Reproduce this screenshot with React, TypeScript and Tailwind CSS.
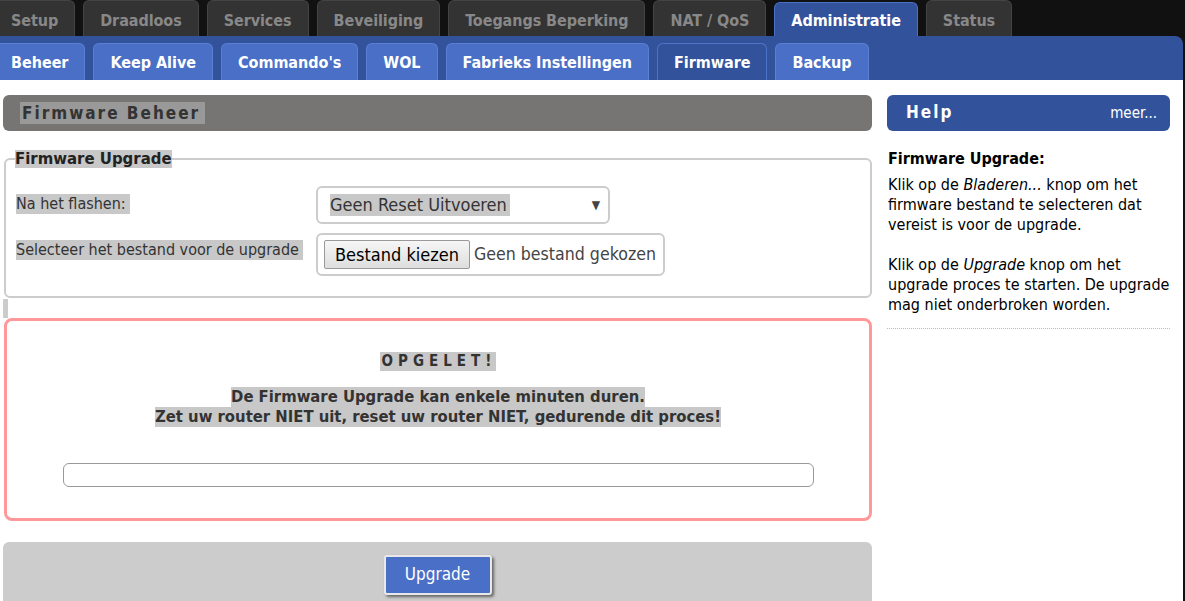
import React from "react";

const F = "font-['DejaVu_Sans_Condensed','DejaVu_Sans',sans-serif]";

const topTabs = ["Setup", "Draadloos", "Services", "Beveiliging", "Toegangs Beperking", "NAT / QoS", "Administratie", "Status"];
const subTabs = ["Beheer", "Keep Alive", "Commando's", "WOL", "Fabrieks Instellingen", "Firmware", "Backup"];

export default function App() {
  return (
    <div className={`w-[1185px] h-[601px] overflow-hidden bg-[#111] ${F}`}>
      {/* top tabs */}
      <div className="flex gap-2 -ml-[6px] h-[36px] items-end">
        {topTabs.map((t) =>
          t === "Administratie" ? (
            <div key={t} className="h-[34px] px-4 pt-[2px] rounded-t-[6px] bg-[#32539c] border border-b-0 border-[#4a6fc6] text-white font-bold text-[16px] tracking-[-0.07px] flex items-center">
              {t}
            </div>
          ) : (
            <div key={t} className="h-[36px] px-4 pt-[4px] rounded-t-[6px] bg-[#333] border border-b-0 border-[#444] text-[#888] font-bold text-[16px] tracking-[-0.07px] flex items-center">
              {t}
            </div>
          )
        )}
      </div>
      {/* sub tabs */}
      <div className="h-[44px] bg-[#32539c] rounded-tr-[8px] w-[1183px] flex items-end">
        <div className="flex gap-2 -ml-[6px]">
          {subTabs.map((t) => (
            <div
              key={t}
              className={
                t === "Firmware"
                  ? "h-[37px] px-4 pt-[2px] rounded-t-[6px] bg-[#32539c] border border-b-0 border-[#4f73c8] text-white font-bold text-[16px] tracking-[-0.03px] flex items-center"
                  : "h-[37px] px-4 pt-[2px] rounded-t-[6px] bg-[#4a6fc6] border border-b-0 border-[#5b80d2] text-white font-bold text-[16px] tracking-[-0.03px] flex items-center"
              }
            >
              {t}
            </div>
          ))}
        </div>
      </div>
      {/* content */}
      <div className="bg-white h-[521px] w-[1183px] flex gap-[15px] pt-[15px]">
        {/* left */}
        <div className="ml-[3px] w-[869px] flex flex-col">
          <div className="h-[36px] bg-[#777573] rounded-[6px] flex items-center pl-[17px]">
            <span className="bg-[#999] pl-[2px] pr-[5px] text-[#333] font-bold text-[17px] tracking-[2px] leading-[22px]">Firmware Beheer</span>
          </div>
          <fieldset className="mt-[19px] ml-[1px] border-2 border-[#ccc] rounded-[6px] px-[10px] pb-[20px] pt-[18px]">
            <legend className="px-0 -ml-[1px]">
              <span className="bg-[#c8c8c8] text-[#222] font-bold text-[16.6px] leading-[18px] block">Firmware Upgrade</span>
            </legend>
            <div className="flex items-start h-[38px]">
              <div className="w-[300px] pt-[6px]">
                <span className="bg-[#c8c8c8] text-[#333] text-[16px] leading-[20px] inline-block pr-[4px]">Na het flashen:</span>
              </div>
              <div className="w-[294px] h-[38px] border-2 border-[#ccc] rounded-[6px] flex items-center pl-[12px] pr-[8px] justify-between">
                <span className="bg-[#c8c8c8] text-[#333] text-[18px] leading-[22px] pr-[3px]">Geen Reset Uitvoeren</span>
                <span className="text-[#444] text-[12px]">▼</span>
              </div>
            </div>
            <div className="flex items-start mt-[9px]">
              <div className="w-[300px] pt-[5px]">
                <span className="bg-[#c8c8c8] text-[#333] text-[16px] leading-[20px] inline-block pr-[4px]">Selecteer het bestand voor de upgrade</span>
              </div>
              <div className="w-[349px] h-[43px] border-2 border-[#ccc] rounded-[6px] flex items-center pl-[6px] gap-[4px]">
                <div className="h-[29px] w-[146px] border border-[#999] rounded-[2px] bg-gradient-to-b from-[#f6f6f6] to-[#dedede] flex items-center justify-center text-black text-[18px]">
                  Bestand kiezen
                </div>
                <span className="text-[#444] text-[17.6px]">Geen bestand gekozen</span>
              </div>
            </div>
          </fieldset>
          <div className="w-[5px] h-[19px] bg-[#ccc] mt-[1px]" />
          <div className="ml-[1px] h-[203px] border-[3px] border-[#f99] rounded-[8px] flex flex-col items-center pt-[31px]">
            <span className="bg-[#c8c8c8] text-[#333] font-bold text-[15px] tracking-[5px] leading-[19px] pl-[2px]">OPGELET!</span>
            <div className="mt-[16px] flex flex-col items-center text-[#333] font-bold text-[16.5px] leading-[20px]">
              <span className="bg-[#c8c8c8]">De Firmware Upgrade kan enkele minuten duren.</span>
              <span className="bg-[#c8c8c8]">Zet uw router NIET uit, reset uw router NIET, gedurende dit proces!</span>
            </div>
            <div className="mt-[36px] w-[751px] h-[24px] border border-[#999] rounded-[6px]" />
          </div>
          <div className="mt-[21px] flex-1 bg-[#ccc] rounded-t-[6px] flex justify-center pt-[13px]">
            <div className="w-[108px] h-[40px] bg-[#4a6fc6] border-2 border-[#e8e8e8] rounded-[3px] shadow-[2px_2px_3px_#666] flex items-center justify-center text-white text-[17px]">
              Upgrade
            </div>
          </div>
        </div>
        {/* right */}
        <div className="w-[283px] flex flex-col">
          <div className="h-[36px] bg-[#32539c] rounded-[6px] flex items-center justify-between pl-[19px] pr-[13px]">
            <span className="text-white font-bold text-[17px] tracking-[2px]">Help</span>
            <span className="text-white text-[15px]">meer...</span>
          </div>
          <div className="pl-[1px] mt-[18px] text-black">
            <div className="font-bold text-[16px] leading-[20px]">Firmware Upgrade:</div>
            <p className="text-[16px] leading-[20px] mt-[6px]">
              Klik op de <i>Bladeren...</i> knop om het firmware bestand te selecteren dat vereist is voor de upgrade.
            </p>
            <p className="text-[16px] leading-[20px] mt-[20px]">
              Klik op de <i>Upgrade</i> knop om het upgrade proces te starten. De upgrade mag niet onderbroken worden.
            </p>
          </div>
          <div className="mt-[13px] border-b border-dotted border-[#bbb]" />
        </div>
      </div>
    </div>
  );
}
